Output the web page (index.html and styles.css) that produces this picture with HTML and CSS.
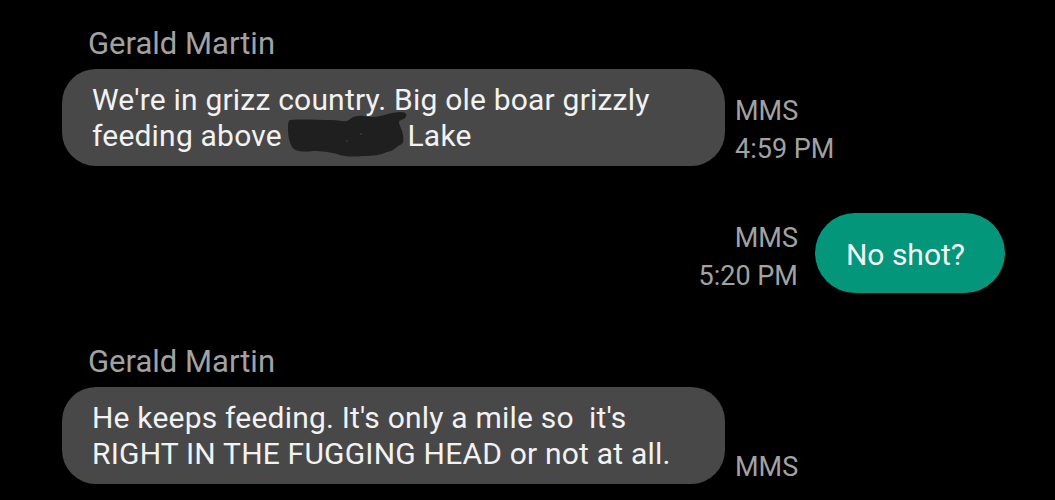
FILE: index.html
```html
<!DOCTYPE html>
<html lang="en">
<head>
<meta charset="utf-8">
<title>Messages</title>
<link rel="stylesheet" href="styles.css">
</head>
<body>
<main class="thread">
  <section class="group group-in">
    <div class="sender">Gerald Martin</div>
    <div class="row">
      <div class="bubble bubble-in">We're in grizz country. Big ole boar grizzly feeding above <span class="redact"><svg class="scribble" width="121" height="48" viewBox="0 0 121 48"><path d="M3 9 C15 8 32 9 45 9 C52 9 56 11 60 10 C64 8 66 5 71 5 C76 4 80 6 86 6 C94 6 104 1 114 1 C119 1 121 4 118 7 C116 9 112 9 112 11 C112 14 115 18 116 24 C117 30 116 33 113 34 C108 37 106 40 100 41 C93 44 88 45 76 45 C66 46 58 46 50 43 C42 41 36 40 26 40 C16 41 9 41 5 36 C2 31 1 24 1 19 C1 14 1 10 3 9 Z" fill="#1f1f1f"/><circle cx="60" cy="30" r="1" fill="#3a3a3a"/><circle cx="74" cy="23" r="1" fill="#3a3a3a"/></svg></span>Lake</div>
      <div class="meta"><div>MMS</div><div>4:59 PM</div></div>
    </div>
  </section>

  <section class="group group-out">
    <div class="row row-out">
      <div class="meta meta-out"><div>MMS</div><div>5:20 PM</div></div>
      <div class="bubble bubble-out">No shot?</div>
    </div>
  </section>

  <section class="group group-in group-later">
    <div class="sender">Gerald Martin</div>
    <div class="row">
      <div class="bubble bubble-in">He keeps feeding. It's only a mile so&nbsp; it's RIGHT IN THE FUGGING HEAD or not at all.</div>
      <div class="meta"><div>MMS</div></div>
    </div>
  </section>
</main>
</body>
</html>
```

FILE: styles.css
```css
html, body {
  margin: 0;
  padding: 0;
  background: #000;
}

body {
  font-family: Roboto, "Noto Sans", "Liberation Sans", sans-serif;
  color: #f2f2f2;
  overflow: hidden;
}

.thread {
  padding: 27px 50px 0 62px;
  display: flex;
  flex-direction: column;
}

.sender {
  font-size: 31px;
  line-height: 34px;
  color: #a2a2a2;
  padding-left: 26px;
  margin-bottom: 8px;
}

.row {
  display: flex;
  align-items: flex-end;
  gap: 10px;
}

.row-out {
  justify-content: flex-end;
  gap: 17px;
}

.group-out {
  margin-top: 47px;
}

.group-later {
  margin-top: 52px;
}

.bubble {
  font-size: 30px;
  line-height: 36px;
  letter-spacing: 0.2px;
  box-sizing: border-box;
}

.bubble-in {
  width: 663px;
  background: #484848;
  border-radius: 34px;
  padding: 13px 30px 12px 30px;
}

.bubble-out {
  background: #03967a;
  color: #f4f4f4;
  height: 80px;
  border-radius: 40px;
  padding: 3px 40px 0 31px;
  display: flex;
  align-items: center;
  letter-spacing: 0;
}

.meta {
  font-size: 27px;
  line-height: 38px;
  color: #a2a2a2;
  margin-bottom: -2px;
}

.meta-out {
  text-align: right;
}

.redact {
  display: inline-block;
  position: relative;
  width: 118px;
  height: 1px;
}

.scribble {
  position: absolute;
  left: -3px;
  top: -34px;
}
```
